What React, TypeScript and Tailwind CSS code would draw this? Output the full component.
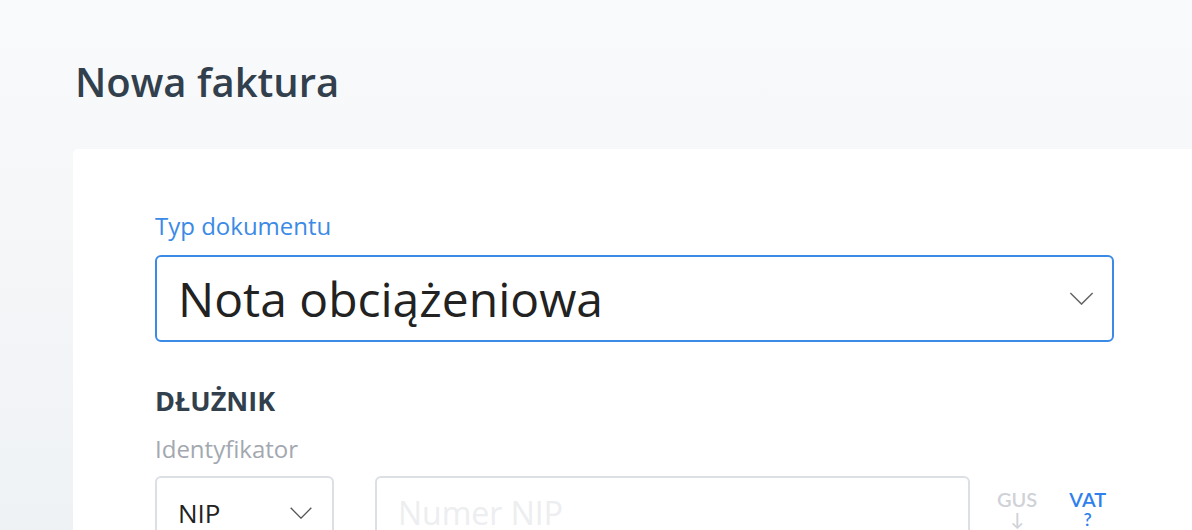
import React from "react";

const Chevron = ({ className }: { className?: string }) => (
  <svg viewBox="0 0 26 14" className={className} fill="none" stroke="currentColor" strokeWidth="1.6">
    <path d="M1 1 L13 13 L25 1" />
  </svg>
);

export default function App() {
  return (
    <div
      className="w-[1192px] h-[530px] overflow-hidden bg-gradient-to-b from-[#f9fafb] to-[#eff2f5] pl-[73px]"
      style={{ fontFamily: '"Open Sans", sans-serif' }}
    >
      <h1 className="pt-[52px] pl-[2px] h-[149px] text-[40px] font-semibold text-[#323f4d] leading-[60px]">
        Nowa faktura
      </h1>
      <div className="bg-white rounded-tl-[5px] h-[400px] pl-[82px] pt-[62px]">
        <div className="text-[24px] text-[#3b8ae6] leading-[30px]">Typ dokumentu</div>
        <div className="mt-[14px] w-[959px] h-[87px] border-2 border-[#3b8ae6] rounded-[6px] flex items-center pl-[21px] pr-[18px]">
          <span className="flex-1 text-[48px] text-[#222] leading-[60px]">Nota obciążeniowa</span>
          <Chevron className="w-[25px] h-[13px] text-[#666]" />
        </div>
        <div className="mt-[41px] text-[27px] font-bold text-[#323f4d] leading-[36px]">DŁUŻNIK</div>
        <div className="mt-[14px] text-[24px] text-[#a3a8b0] leading-[32px]">Identyfikator</div>
        <div className="mt-[11px] flex items-start">
          <div className="w-[179px] h-[74px] border-2 border-[#dcdfe3] rounded-[6px] flex items-center pl-[21px] pr-[19px]">
            <span className="flex-1 text-[26px] text-[#222] leading-[34px]">NIP</span>
            <Chevron className="w-[24px] h-[12px] text-[#555]" />
          </div>
          <div className="ml-[41px] w-[595px] h-[74px] border-2 border-[#dcdfe3] rounded-[6px] flex items-center pl-[21px]">
            <span className="text-[32px] text-[#eceef0] leading-[42px]">Numer NIP</span>
          </div>
          <div className="ml-[27px] mt-[12px] flex flex-col items-center text-[20px] font-semibold text-[#cfd2d6] leading-[20px]" style={{ fontFamily: 'Lato, sans-serif' }}>
            <span className="leading-[22px]">GUS</span>
            <span className="text-[18px] leading-[18px]">↓</span>
          </div>
          <div className="ml-[32px] mt-[12px] flex flex-col items-center text-[20px] font-semibold text-[#2f80ed] leading-[20px]" style={{ fontFamily: 'Lato, sans-serif' }}>
            <span className="leading-[22px]">VAT</span>
            <span className="text-[18px] leading-[18px]">?</span>
          </div>
        </div>
      </div>
    </div>
  );
}
